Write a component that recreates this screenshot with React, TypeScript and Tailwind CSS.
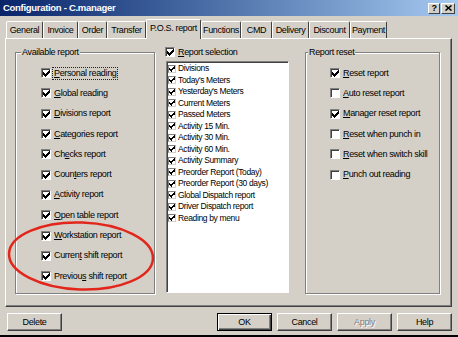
import React from 'react';

const tabs = [
  { label: 'General', w: 'w-[37px]' },
  { label: 'Invoice', w: 'w-[35px]' },
  { label: 'Order', w: 'w-[29px]' },
  { label: 'Transfer', w: 'w-[39px]' },
  { label: 'P.O.S. report', w: 'w-[55px]', active: true },
  { label: 'Functions', w: 'w-[40px]' },
  { label: 'CMD', w: 'w-[31px]' },
  { label: 'Delivery', w: 'w-[37px]' },
  { label: 'Discount', w: 'w-[41px]' },
  { label: 'Payment', w: 'w-[37px]' },
];

// "&" marks the underlined (mnemonic) letter
const available = [
  ['&Personal reading', true],
  ['&Global reading', true],
  ['&Divisions report', true],
  ['&Categories report', true],
  ['Ch&ecks report', true],
  ['Coun&ters report', true],
  ['&Activity report', true],
  ['&Open table report', true],
  ['&Workstation report', true],
  ['Curren&t shift report', true],
  ['Previou&s shift report', true],
] as const;

const resets = [
  ['&Reset report', true],
  ['&Auto reset report', false],
  ['&Manager reset report', true],
  ['&Reset when punch in', false],
  ['&Reset when switch skill', false],
  ['&Punch out reading', false],
] as const;

const selection = [
  'Divisions',
  "Today's Meters",
  "Yesterday's Meters",
  'Current Meters',
  'Passed Meters',
  'Activity 15 Min.',
  'Activity 30 Min.',
  'Activity 60 Min.',
  'Activity Summary',
  'Preorder Report (Today)',
  'Preorder Report (30 days)',
  'Global Dispatch report',
  'Driver Dispatch report',
  'Reading by menu',
];

function Label({ text }: { text: string }) {
  const i = text.indexOf('&');
  if (i < 0) return <>{text}</>;
  return (
    <>
      {text.slice(0, i)}
      <span className="underline underline-offset-[1px]">{text[i + 1]}</span>
      {text.slice(i + 2)}
    </>
  );
}

function Tick({ size }: { size: number }) {
  return (
    <svg width={size} height={size} viewBox="0 0 7 7" shapeRendering="crispEdges">
      <path
        d="M6 0h1v3h-1z M5 1h1v3h-1z M4 2h1v3h-1z M3 3h1v3h-1z M2 4h1v3h-1z M1 3h1v3h-1z M0 2h1v3h-1z"
        fill="#000"
      />
    </svg>
  );
}

function Check({ checked }: { checked: boolean }) {
  return (
    <span className="w-[10px] h-[10px] shrink-0 bg-white border border-[#808080] border-r-white border-b-white shadow-[inset_1px_1px_0_#404040] flex items-center justify-center pl-[1px] pt-[1px]">
      {checked && <Tick size={7} />}
    </span>
  );
}

function Row({ text, checked, focus }: { text: string; checked: boolean; focus?: boolean }) {
  return (
    <div className="h-[20.3px] flex items-center gap-[1px] whitespace-nowrap">
      <Check checked={checked} />
      <span
        className={
          focus
            ? 'px-[1px] leading-[11px] border border-dotted border-[#222]'
            : 'px-[1px] leading-[11px] border border-transparent'
        }
      >
        <Label text={text} />
      </span>
    </div>
  );
}

function Btn({ label, kind }: { label: string; kind?: 'default' | 'disabled' }) {
  if (kind === 'default') {
    return (
      <div className="w-[55px] h-[18px] flex items-center justify-center border border-black shadow-[inset_1px_1px_0_#fff,inset_-1px_-1px_0_#404040,inset_-2px_-2px_0_#808080]">
        {label}
      </div>
    );
  }
  return (
    <div className="w-[55px] h-[18px] flex items-center justify-center border border-white border-r-[#404040] border-b-[#404040] shadow-[inset_-1px_-1px_0_#808080]">
      <span className={kind === 'disabled' ? 'text-[#808080] [text-shadow:1px_1px_0_#fff]' : ''}>{label}</span>
    </div>
  );
}

export default function App() {
  return (
    <div className="relative w-[458px] h-[337px] overflow-hidden bg-[#d4d0c8] text-black text-[9px] tracking-[-0.35px] leading-none font-['Liberation_Sans',Arial,sans-serif] border-b-2 border-black">
      {/* title bar */}
      <div className="h-[16px] flex items-center justify-between pl-[3px] pr-[3px] bg-gradient-to-r from-[#0a246a] to-[#a6caf0]">
        <span className="text-white font-bold text-[9.5px] tracking-[-0.3px]">Configuration - C.manager</span>
        <div className="flex">
          <div className="w-[12px] h-[11px] flex items-center justify-center bg-[#d4d0c8] border border-white border-r-[#404040] border-b-[#404040] text-[9px] font-bold">
            ?
          </div>
          <div className="w-[14px] h-[11px] ml-[1px] flex items-center justify-center bg-[#d4d0c8] border border-white border-r-[#404040] border-b-[#404040]">
            <svg width="7" height="6" viewBox="0 0 7 6">
              <path d="M0.5 0.5L6.5 5.5M6.5 0.5L0.5 5.5" stroke="#000" strokeWidth="1.6" />
            </svg>
          </div>
        </div>
      </div>

      {/* tabs */}
      <div className="h-[19px] mt-[3px] ml-[6px] flex items-end whitespace-nowrap">
        {tabs.map((t) =>
          t.active ? (
            <div
              key={t.label}
              className={`${t.w} h-[20px] -mb-[1px] relative z-10 bg-[#d4d0c8] flex items-center justify-center pb-[2px] border-t border-l border-white border-r border-r-[#404040] rounded-t-[2px]`}
            >
              {t.label}
            </div>
          ) : (
            <div
              key={t.label}
              className={`${t.w} h-[17px] flex items-center justify-center border-t border-l border-white border-r border-r-[#404040] rounded-t-[2px]`}
            >
              {t.label}
            </div>
          ),
        )}
      </div>

      {/* tab page */}
      <div className="ml-[5px] w-[447px] h-[269px] border border-white border-r-[#404040] border-b-[#404040] shadow-[inset_-1px_-1px_0_#808080] flex items-start pl-[9px] pt-[13px]">
        {/* available report */}
        <div className="relative w-[140px] h-[242px] border border-[#808080] shadow-[1px_1px_0_#fff,inset_1px_1px_0_#fff] pt-[10px] pl-[25px]">
          <span className="absolute left-[5px] -top-[6px] px-[1px] bg-[#d4d0c8] leading-[11px]">Available report</span>
          {available.map(([text, checked], i) => (
            <Row key={text} text={text} checked={checked} focus={i === 0} />
          ))}
        </div>

        {/* report selection */}
        <div className="ml-[10px] w-[124px] -mt-[5px] flex flex-col">
          <div className="h-[10px] flex items-center gap-[3px]">
            <Check checked />
            <span className="leading-[11px]">
              <Label text="&Report selection" />
            </span>
          </div>
          <div className="mt-[4px] ml-[1px] w-[123px] h-[232px] bg-white border border-[#808080] border-r-white border-b-white shadow-[inset_1px_1px_0_#404040] pt-[1px] pl-[1px] text-[8.5px] whitespace-nowrap">
            {selection.map((s) => (
              <div key={s} className="h-[11.5px] flex items-center gap-[2px]">
                <span className="w-[8px] h-[8px] shrink-0 bg-white border border-[#808080] border-r-[#d4d0c8] border-b-[#d4d0c8] flex items-center justify-center">
                  <Tick size={6} />
                </span>
                <span className="leading-[11px]">{s}</span>
              </div>
            ))}
          </div>
        </div>

        {/* report reset */}
        <div className="relative ml-[16px] w-[135px] h-[242px] border border-[#808080] shadow-[1px_1px_0_#fff,inset_1px_1px_0_#fff] pt-[10px] pl-[24px]">
          <span className="absolute left-[2px] -top-[6px] px-[1px] bg-[#d4d0c8] leading-[11px]">Report reset</span>
          {resets.map(([text, checked], i) => (
            <Row key={text + i} text={text} checked={checked} />
          ))}
        </div>
      </div>

      {/* buttons */}
      <div className="mt-[6px] pl-[7px] pr-[6px] flex items-center">
        <Btn label="Delete" />
        <div className="ml-auto flex gap-[5px]">
          <Btn label="OK" kind="default" />
          <Btn label="Cancel" />
          <Btn label="Apply" kind="disabled" />
          <Btn label="Help" />
        </div>
      </div>

      {/* red annotation circle drawn over the dialog */}
      <svg className="absolute left-0 top-0 pointer-events-none" width="458" height="337" viewBox="0 0 458 337">
        <ellipse cx="81" cy="256" rx="72" ry="33.5" fill="none" stroke="#e3261b" strokeWidth="2.5" transform="rotate(2 81 256)" />
      </svg>
    </div>
  );
}
